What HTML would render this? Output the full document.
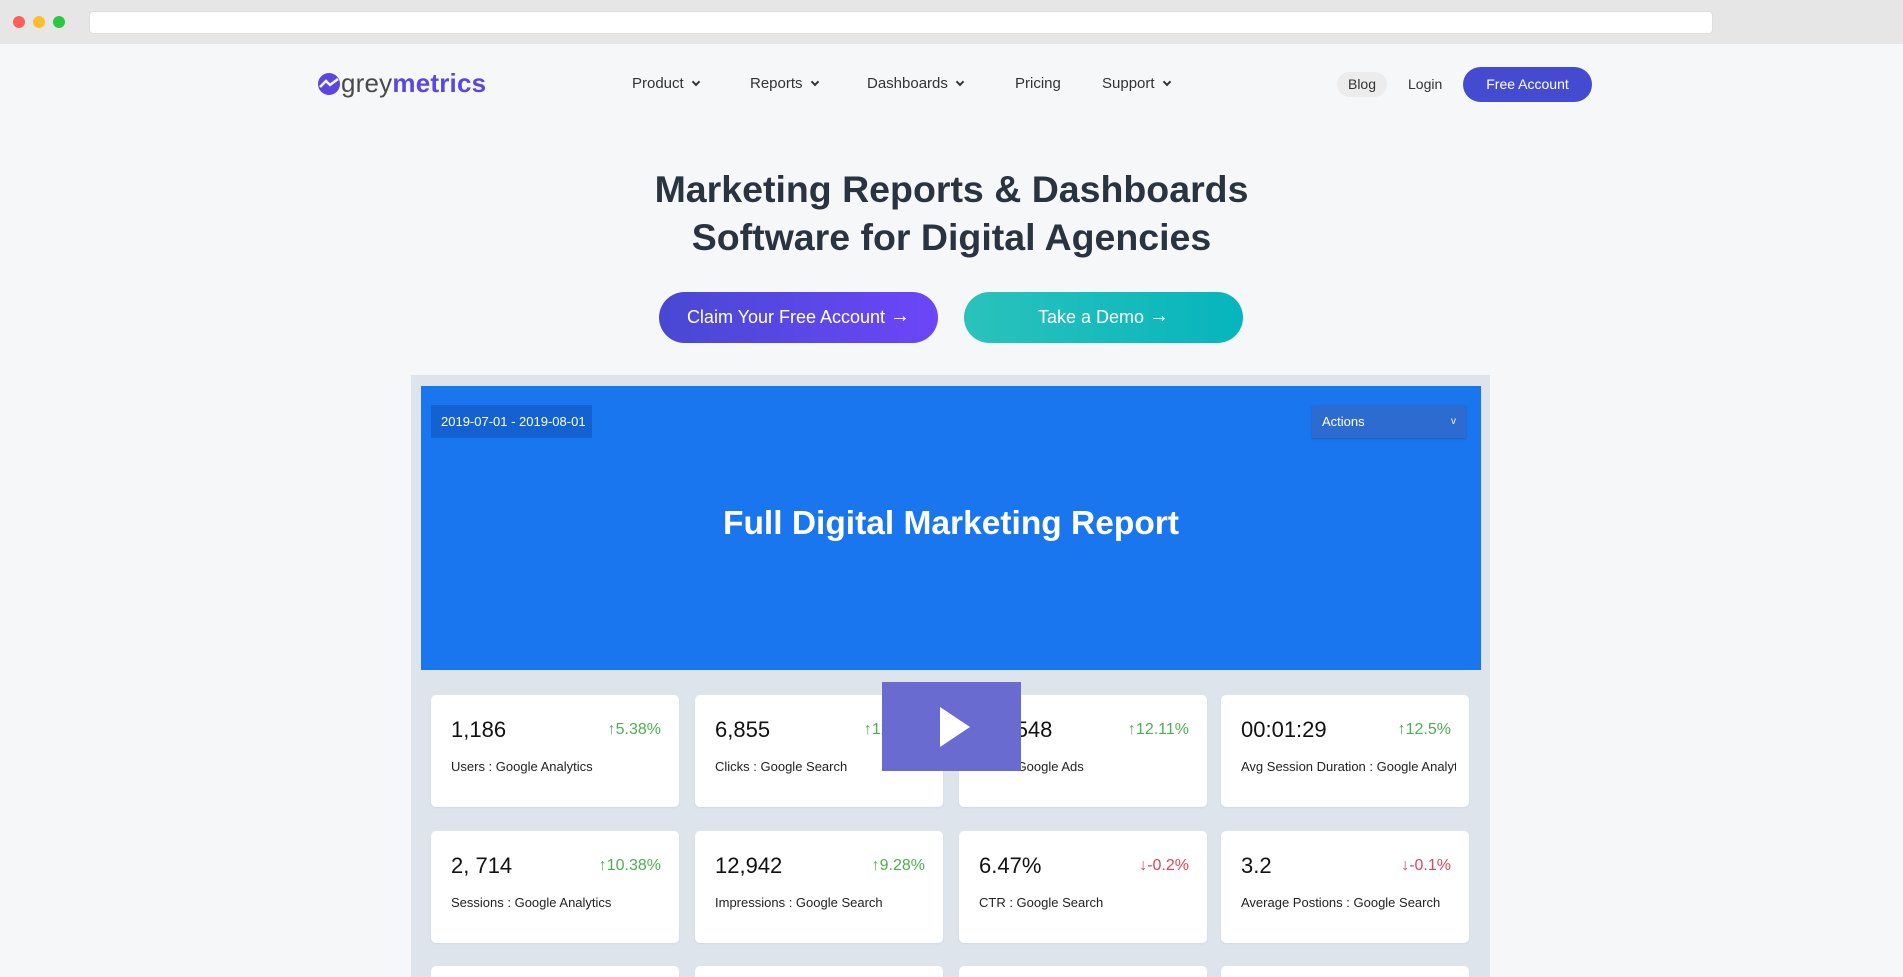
<!DOCTYPE html>
<html><head><meta charset="utf-8"><style>
*{margin:0;padding:0;box-sizing:border-box}
html,body{width:1903px;height:977px;overflow:hidden}
body{background:#f6f7f9;font-family:"Liberation Sans",sans-serif}
#wrap{position:relative;width:1903px;height:977px;overflow:hidden}
.abs{position:absolute}
.chrome{left:0;top:0;width:1903px;height:44px;background:#e6e6e6}
.dot{width:12px;height:12px;border-radius:50%;top:16px}
.addr{left:89px;top:11px;width:1624px;height:23px;background:#fff;border-radius:4px;border:1px solid #ddd}
.nav{top:75px;font-size:15px;color:#333}
.car{display:inline-block;width:6px;height:6px;border-right:2px solid #333;border-bottom:2px solid #333;transform:rotate(45deg);margin-left:9px;position:relative;top:-3px}
h1{position:absolute;left:0;width:1903px;text-align:center;top:165px;font-size:37.5px;line-height:48px;color:#2a3340;font-weight:bold}
.btn{top:292px;width:279px;height:51px;border-radius:26px;color:#fff;font-size:18px;text-align:center;line-height:51px}
.frame{left:411px;top:375px;width:1079px;height:602px;background:#dde4ec}
.blue{left:421px;top:386px;width:1060px;height:284px;background:#1a76ef}
.card{background:#fff;border-radius:5px;width:248px;height:112px;box-shadow:0 1px 2px rgba(0,0,0,.06)}
.num{position:absolute;left:20px;top:22px;font-size:22px;color:#111}
.pct{position:absolute;right:18px;top:26px;font-size:16px}
.up{color:#4caf50}.dn{color:#e0445a}
.lbl{position:absolute;left:20px;top:64px;font-size:13px;color:#222;white-space:nowrap;overflow:hidden;width:215px}
</style></head><body><div id="wrap">
<div class="abs chrome"></div>
<div class="abs dot" style="left:13px;background:#fe5f57"></div>
<div class="abs dot" style="left:33px;background:#febc2e"></div>
<div class="abs dot" style="left:53px;background:#28c840"></div>
<div class="abs addr"></div>

<svg class="abs" style="left:318px;top:73px" width="22" height="22" viewBox="0 0 22 22"><circle cx="11" cy="11" r="11" fill="#5a46e0"/><path d="M2 14 L8 8 L12 12 L20 6" stroke="#f6f7f9" stroke-width="2.5" fill="none"/></svg>
<div class="abs" style="left:341px;top:68px;font-size:26px;letter-spacing:0.2px"><span style="color:#4a4a4a">grey</span><span style="color:#5a46e0;font-weight:bold">metrics</span></div>

<div class="abs nav" style="left:632px">Product<span class="car"></span></div>
<div class="abs nav" style="left:750px">Reports<span class="car"></span></div>
<div class="abs nav" style="left:867px">Dashboards<span class="car"></span></div>
<div class="abs nav" style="left:1015px">Pricing</div>
<div class="abs nav" style="left:1102px">Support<span class="car"></span></div>
<div class="abs" style="left:1337px;top:72px;width:50px;height:25px;border-radius:13px;background:#ececec;font-size:14px;color:#333;text-align:center;line-height:25px">Blog</div>
<div class="abs" style="left:1408px;top:76px;font-size:14px;color:#333">Login</div>
<div class="abs" style="left:1463px;top:67px;width:129px;height:35px;border-radius:18px;background:#444bd0;color:#fff;font-size:14px;text-align:center;line-height:35px">Free Account</div>

<h1>Marketing Reports &amp; Dashboards<br>Software for Digital Agencies</h1>
<div class="abs btn" style="left:659px;background:linear-gradient(90deg,#4848d2,#6c46f8)">Claim Your Free Account <span style="font-size:20px;position:relative;top:-1px">→</span></div>
<div class="abs btn" style="left:964px;background:linear-gradient(90deg,#2ac2bb,#06b5bd)">Take a Demo <span style="font-size:20px;position:relative;top:-1px">→</span></div>

<div class="abs frame"></div>
<div class="abs blue"></div>
<div class="abs" style="left:431px;top:405px;width:161px;height:33px;background:#1462d1;color:#fff;font-size:13px;line-height:33px;padding-left:10px">2019-07-01 - 2019-08-01</div>
<div class="abs" style="left:1312px;top:405px;width:154px;height:33px;background:#2d6bd0;color:#fff;font-size:13px;line-height:33px;padding-left:10px;box-shadow:0 1px 2px rgba(0,0,0,.2)">Actions<span style="position:absolute;right:10px;font-size:10px">v</span></div>
<div class="abs" style="left:421px;width:1060px;top:505px;text-align:center;color:#fff;font-size:33.5px;font-weight:bold">Full Digital Marketing Report</div>

<div class="abs card" style="left:431px;top:695px"><div class="num">1,186</div><div class="pct up">↑5.38%</div><div class="lbl">Users : Google Analytics</div></div>
<div class="abs card" style="left:695px;top:695px"><div class="num">6,855</div><div class="pct up">↑12.11%</div><div class="lbl">Clicks : Google Search</div></div>
<div class="abs card" style="left:959px;top:695px"><div class="num">$ 4,548</div><div class="pct up">↑12.11%</div><div class="lbl">Cost : Google Ads</div></div>
<div class="abs card" style="left:1221px;top:695px"><div class="num">00:01:29</div><div class="pct up">↑12.5%</div><div class="lbl">Avg Session Duration : Google Analytics</div></div>
<div class="abs card" style="left:431px;top:831px"><div class="num">2, 714</div><div class="pct up">↑10.38%</div><div class="lbl">Sessions : Google Analytics</div></div>
<div class="abs card" style="left:695px;top:831px"><div class="num">12,942</div><div class="pct up">↑9.28%</div><div class="lbl">Impressions : Google Search</div></div>
<div class="abs card" style="left:959px;top:831px"><div class="num">6.47%</div><div class="pct dn">↓-0.2%</div><div class="lbl">CTR : Google Search</div></div>
<div class="abs card" style="left:1221px;top:831px"><div class="num">3.2</div><div class="pct dn">↓-0.1%</div><div class="lbl">Average Postions : Google Search</div></div>
<div class="abs card" style="left:431px;top:966px;height:11px;border-radius:5px 5px 0 0"></div>
<div class="abs card" style="left:695px;top:966px;height:11px;border-radius:5px 5px 0 0"></div>
<div class="abs card" style="left:959px;top:966px;height:11px;border-radius:5px 5px 0 0"></div>
<div class="abs card" style="left:1221px;top:966px;height:11px;border-radius:5px 5px 0 0"></div>

<div class="abs" style="left:882px;top:682px;width:139px;height:89px;background:#6a6bd0"></div>
<svg class="abs" style="left:940px;top:707px" width="30" height="40" viewBox="0 0 30 40"><path d="M0 0 L30 20 L0 40 Z" fill="#fff"/></svg>
</div></body></html>
